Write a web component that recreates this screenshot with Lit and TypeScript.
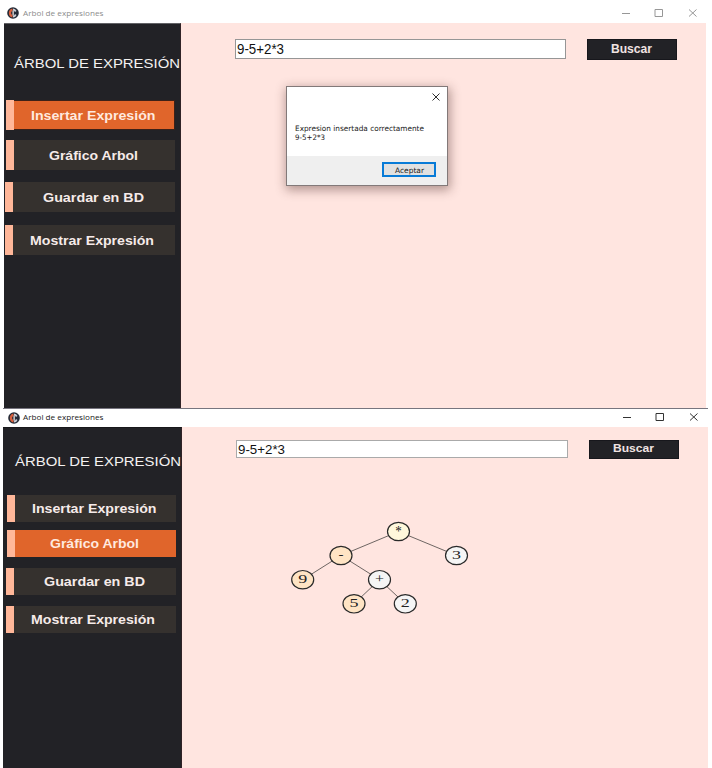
import { LitElement, html, svg, css } from "lit";
import { customElement, property } from "lit/decorators.js";
import { classMap } from "lit/directives/class-map.js";

/** A single line of text fitted to a width; its bottom edge is the baseline. */
@customElement("fit-label")
class FitLabel extends LitElement {
  static styles = css`
    :host { display: block; flex: none; }
    svg { display: block; overflow: visible; }
    text { fill: currentColor; }
  `;
  @property() text = "";
  @property({ type: Number }) width = 10;
  @property({ type: Number }) size = 12;
  render() {
    return html`<svg width=${this.width} height=${this.size}>
      <text x="0" y=${this.size} font-size=${this.size} textLength=${this.width} lengthAdjust="spacingAndGlyphs">${this.text}</text>
    </svg>`;
  }
}

const label = (text: string, width: number, size: number) =>
  html`<fit-label .text=${text} .width=${width} .size=${size}></fit-label>`;

const logo = html`<svg class="logo" viewBox="0 0 24 24">
  <circle cx="12" cy="12" r="11.6" fill="#232a36" />
  <path d="M11 3 A9.200 9.200 0 0 0 11 21 L11 16 A4.200 4.200 0 0 1 11 8Z" fill="#d9603d" />
  <path d="M12 3 Q17 3 19 8 L16 10 Q15 7 12 7Z M12 21 Q17 21 19 16 L16 14 Q15 17 12 17Z" fill="#c9ced6" />
  <path d="M11 7 H13.500 V17 H11Z" fill="#f3e9e4" />
</svg>`;

const controls = html`<svg class="controls" viewBox="0 0 76 8">
  <path d="M0 4.500H8 M33 .5H40.500V7.500H33Z M67 .5L74.500 7.500 M74.500 .5L67 7.500" />
</svg>`;

interface Item { text: string; x: number; w: number; }
const items: Item[] = [
  { text: "Insertar Expresión", x: 17, w: 124.5 },
  { text: "Gráfico Arbol", x: 35, w: 89 },
  { text: "Guardar en BD", x: 30, w: 101 },
  { text: "Mostrar Expresión", x: 17, w: 124 },
];

const nodes = [
  { t: "*", x: 398.5, y: 531.5, fill: "#fff8dc", w: 6.5, dy: 4.5, size: 15 },
  { t: "-", x: 341, y: 555.5, fill: "#ffe4c4", w: 5, dy: 3.5, size: 12 },
  { t: "3", x: 456.5, y: 555.5, fill: "#f5f5f5", w: 9, dy: 3.5, size: 13 },
  { t: "9", x: 302.7, y: 579.7, fill: "#ffe4c4", w: 9, dy: 3.5, size: 13 },
  { t: "+", x: 379.5, y: 579.7, fill: "#f5f5f5", w: 9, dy: 3.5, size: 13 },
  { t: "5", x: 354, y: 603.8, fill: "#ffe4c4", w: 9, dy: 3.5, size: 13 },
  { t: "2", x: 405.3, y: 603.8, fill: "#f5f5f5", w: 9, dy: 3.5, size: 13 },
];
const edges = [[0, 1], [0, 2], [1, 3], [1, 4], [4, 5], [4, 6]];

@customElement("app-root")
class AppRoot extends LitElement {
  static styles = css`
    * { box-sizing: border-box; }
    :host { display: block; width: 712px; height: 768px; background: #fff; overflow: hidden; font-family: "Liberation Sans", Arial, sans-serif; }
    .window { display: flex; flex-direction: column; width: 702px; height: 408px; margin-left: 4px; }
    .second { width: 705px; height: 360px; margin-left: 3px; border-top: 1px solid #77757f; }
    .titlebar { display: flex; height: 23px; color: #8c8c8c; padding: 7px 10px 0 3px; font-family: "Open Sans", "Noto Sans", sans-serif; flex: none; }
    .titlebar fit-label { margin-top: 1px; }
    .second .titlebar { height: 18px; padding: 3px 9px 0 5px; color: #202020; }
    .second .titlebar fit-label { margin-left: -.5px; margin-top: .4px; }
    .logo { width: 12px; height: 12px; margin-right: 3.500px; flex: none; }
    .controls { width: 76px; height: 8px; margin: 2px -2px 0 auto; fill: none; stroke: #979797; stroke-width: 1; }
    .second .controls { stroke: #333; margin: 1px 0 0 auto; }
    .body { display: flex; flex: 1; min-height: 0; background: #ffe5e0; }
    .side { width: 177px; background: #222226; padding: 31px 0 0 2px; border-top: 1px solid #626266; flex: none; border-right: 1px solid #302226; }
    .second .side { width: 179.400px; padding: 26px 0 0 4px; border-top-color: #18181b; }
    .heading { color: #f4f2f2; margin-left: 8px; height: 45px; -webkit-text-stroke: .35px #f4f2f2; }
    .second .heading { height: 41px; }
    .menu { display: grid; grid-template-rows: 28px 30px 31px 30px; row-gap: 12px; }
    .second .menu { grid-template-rows: 26px 27px 28px 27px; row-gap: 10px; }
    .item { display: flex; width: 169px; height: 30px; background: #35312e; color: #f6ebe9; font-weight: bold; border-left: 8px solid #ffb799; }
    .second .item { height: 27px; }
    .second .item:nth-child(2) { margin-top: -1px; }
    .item:nth-child(n + 3) { margin-left: -1px; width: 170px; }
    .second .item:nth-child(n + 3) { margin-left: -.6px; width: 169.600px; }
    .item.active { background: #e0652b; color: #ffe9df; }
    .window:not(.second) .item.active { box-shadow: inset 0 1px #3c2118, inset 0 -1px #3c2118, inset -1px 0 #3c2118; }
    .main { flex: 1; min-width: 0; padding: 16px 0 0 54px; }
    .second .main { padding: 13px 0 0 54px; }
    .search { display: flex; gap: 21px; align-items: flex-start; }
    .field { width: 331px; height: 20px; background: #fff; border: 1px solid #969696; padding: 0 0 0 1.200px; color: #111; }
    .field fit-label { margin-top: -.4px; }
    .buscar { width: 90px; height: 21px; background: #222226; border: 1px solid #17171c; color: #f0e3e2; font-weight: bold; padding: .6px 0 0 23px; }
    .second .field { height: 18px; width: 332px; border-color: #aaa; padding-top: 0; margin-left: -.4px; }
    .second .buscar { height: 19px; padding-top: 0; margin-left: -.5px; }
    .dialog { width: 162px; height: 100px; margin: 26px 0 0 51px; background: #fff; border: 1px solid #827979; box-shadow: 1px 3px 10px 1px rgba(70, 35, 30, .42); display: flex; flex-direction: column; font-family: "DejaVu Sans", sans-serif; color: #191919; }
    .close { width: 8px; height: 8px; margin: 6px 7px 0 auto; stroke: #303030; fill: none; flex: none; }
    .message { flex: 1; padding: 22px 0 0 8px; }
    .message fit-label + fit-label { margin-top: 1.200px; }
    .footer { height: 29px; background: #efefef; padding: 6px 11px 0 0; display: flex; justify-content: flex-end; flex: none; }
    .accept { width: 54px; height: 15px; border: 2px solid #087bd7; background: #e1e1e1; padding: 1px 0 0 10.500px; }
    .tree { display: block; width: 200px; height: 110px; margin: 58px 0 0 50.600px; font-family: "Liberation Serif", serif; }
    .tree line { stroke: #5e5755; stroke-width: .9; }
    .tree ellipse { stroke: #292929; stroke-width: 1.200; }
    .tree text { fill: #222; }
  `;

  private win(second: boolean) {
    const size = second ? 12 : 13;
    const base = second ? 18 : 20;
    return html`<section class=${classMap({ window: true, second })}>
      <header class="titlebar">${logo}${label("Arbol de expresiones", 80.5, 8)}${controls}</header>
      <div class="body">
        <nav class="side">
          <div class="heading">${label("ÁRBOL DE EXPRESIÓN", 166, size)}</div>
          <div class="menu">
            ${items.map((it, i) => html`<div
              class=${classMap({ item: true, active: i === (second ? 1 : 0) })}
              style="padding:${base - size}px 0 0 ${second && i > 1 ? it.x - 0.7 : it.x}px">${label(it.text, it.w, size)}</div>`)}
          </div>
        </nav>
        <main class="main">
          <div class="search">
            <div class="field">${label("9-5+2*3", 47, second ? 12.7 : 13.9)}</div>
            <div class="buscar">${label("Buscar", 41, second ? 11.3 : 12)}</div>
          </div>
          ${second ? this.tree() : this.dialog()}
        </main>
      </div>
    </section>`;
  }

  private dialog() {
    return html`<div class="dialog">
      <svg class="close" viewBox="0 0 8 8"><path d="M.5 .5L7.500 7.500M7.500 .5L.5 7.500" /></svg>
      <div class="message">${label("Expresion insertada correctamente", 129, 7.5)}${label("9-5+2*3", 30, 7.5)}</div>
      <div class="footer"><div class="accept">${label("Aceptar", 29, 7.5)}</div></div>
    </div>`;
  }

  private tree() {
    return html`<svg class="tree" viewBox="287 517 200 110">
      ${edges.map(([a, b]) => svg`<line x1=${nodes[a].x} y1=${nodes[a].y} x2=${nodes[b].x} y2=${nodes[b].y} />`)}
      ${nodes.map((n) => svg`<ellipse cx=${n.x} cy=${n.y} rx="11" ry="9.2" fill=${n.fill} />
        <text x=${n.x - n.w / 2} y=${n.y + n.dy} font-size=${n.size} textLength=${n.w} lengthAdjust="spacingAndGlyphs">${n.t}</text>`)}
    </svg>`;
  }

  render() {
    return html`${this.win(false)}${this.win(true)}`;
  }
}
